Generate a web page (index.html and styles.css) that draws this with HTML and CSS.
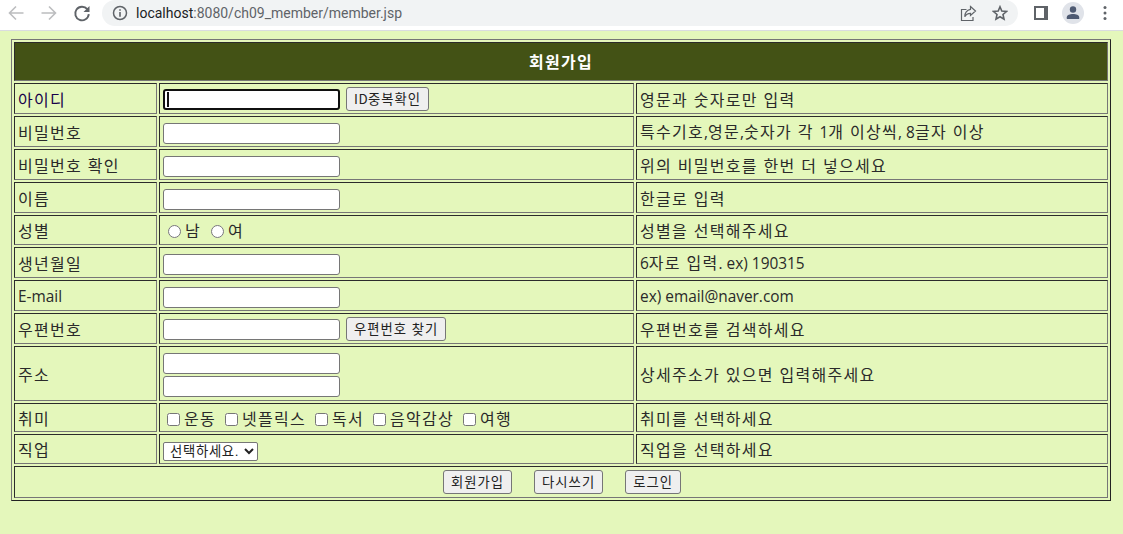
FILE: index.html
```html
<!DOCTYPE html>
<html lang="ko">
<head>
<meta charset="utf-8">
<title>회원가입</title>
<link rel="stylesheet" href="styles.css">
</head>
<body>
<header class="chrome">
  <div class="nav">
    <svg width="20" height="20" viewBox="0 0 20 20"><path d="M17.500 10H4M10 3.500 3.500 10l6.500 6.500" fill="none" stroke="#bcbdbf" stroke-width="1.600"/></svg>
    <svg width="20" height="20" viewBox="0 0 20 20"><path d="M2.500 10H16M10 3.500l6.500 6.500-6.500 6.500" fill="none" stroke="#bcbdbf" stroke-width="1.600"/></svg>
    <svg width="20" height="20" viewBox="0 0 20 20"><path d="M15.300 6.200A6.800 6.800 0 1 0 16.800 11.200" fill="none" stroke="#5f6368" stroke-width="1.900"/><path d="M17.500 3v6h-6z" fill="#5f6368"/></svg>
  </div>
  <div class="omnibox">
    <svg class="info" width="16" height="16" viewBox="0 0 16 16"><circle cx="8" cy="8" r="6.500" fill="none" stroke="#5f6368" stroke-width="1.500"/><path d="M7.200 7h1.600v4.800H7.200zM7.200 4.200h1.600v1.600H7.200z" fill="#5f6368"/></svg>
    <span class="url"><span class="host">localhost</span>:8080/ch09_member/member.jsp</span>
    <span class="spacer"></span>
    <svg class="share" width="18" height="18" viewBox="0 0 18 18"><path d="M7.500 5.500H2.500v11H14v-3.500" fill="none" stroke="#5f6368" stroke-width="1.200"/><path d="M11.500 2.500 16.500 7l-5 4.500V9.300C9 9.300 7 10.300 5.800 12.800 5.800 8.800 8 6 11.500 5.300z" fill="none" stroke="#5f6368" stroke-width="1.200"/></svg>
    <svg class="star" width="16" height="16" viewBox="0 0 16 16"><path d="M8 1.800l1.800 4.300 4.700.4-3.500 3 1 4.600L8 11.700l-4 2.400 1-4.600-3.500-3 4.700-.4z" fill="none" stroke="#5f6368" stroke-width="1.600"/></svg>
  </div>
  <div class="tools">
    <svg class="panel" width="14" height="14" viewBox="0 0 14 14"><path d="M0 0h14v14H0z" fill="#5f6368"/><path d="M2 2h8v10H2z" fill="#fff"/></svg>
    <span class="avatar"><svg width="16" height="16" viewBox="0 0 16 16"><circle cx="8" cy="4.500" r="3.200" fill="#4e5a72"/><path d="M1.800 14v-1.800C1.800 10 5 9 8 9s6.200 1 6.200 3.200V14z" fill="#4e5a72"/></svg></span>
    <svg class="dots" width="6" height="16" viewBox="0 0 6 16"><circle cx="3" cy="2.500" r="1.500" fill="#5f6368"/><circle cx="3" cy="8" r="1.500" fill="#5f6368"/><circle cx="3" cy="13.500" r="1.500" fill="#5f6368"/></svg>
  </div>
</header>
<main class="page">
<form>
<table class="form-table">
  <colgroup><col class="c1"><col class="c2"><col class="c3"></colgroup>
  <tr class="r-head"><th colspan="3">회원가입</th></tr>
  <tr class="r"><td class="lbl-id">아이디</td><td><input type="text" class="txt" autofocus><button type="button" class="btn side"><span class="btn-lat">ID</span>중복확인</button></td><td>영문과 숫자로만 입력</td></tr>
  <tr class="r"><td>비밀번호</td><td><input type="password" class="txt"></td><td>특수기호<span class="lat">,</span>영문<span class="lat">,</span>숫자가 각 <span class="lat">1</span>개 이상씩<span class="lat">, 8</span>글자 이상</td></tr>
  <tr class="r"><td>비밀번호 확인</td><td><input type="password" class="txt"></td><td>위의 비밀번호를 한번 더 넣으세요</td></tr>
  <tr class="r"><td>이름</td><td><input type="text" class="txt"></td><td>한글로 입력</td></tr>
  <tr class="r-s"><td>성별</td><td class="opts"><label><input type="radio" name="g" class="radio">남</label><label><input type="radio" name="g" class="radio">여</label></td><td>성별을 선택해주세요</td></tr>
  <tr class="r"><td>생년월일</td><td><input type="text" class="txt"></td><td><span class="lat">6</span>자로 입력<span class="lat">. ex) 190315</span></td></tr>
  <tr class="r"><td><span class="lat">E-mail</span></td><td><input type="text" class="txt"></td><td><span class="lat">ex) email@naver.com</span></td></tr>
  <tr class="r"><td>우편번호</td><td><input type="text" class="txt"><button type="button" class="btn side">우편번호 찾기</button></td><td>우편번호를 검색하세요</td></tr>
  <tr class="r-addr"><td>주소</td><td class="addr"><input type="text" class="txt block"><input type="text" class="txt block"></td><td>상세주소가 있으면 입력해주세요</td></tr>
  <tr class="r-hob"><td>취미</td><td class="opts"><label><input type="checkbox" class="check">운동</label><label><input type="checkbox" class="check">넷플릭스</label><label><input type="checkbox" class="check">독서</label><label><input type="checkbox" class="check">음악감상</label><label><input type="checkbox" class="check">여행</label></td><td>취미를 선택하세요</td></tr>
  <tr class="r-s"><td>직업</td><td><select class="sel"><option>선택하세요.</option></select></td><td>직업을 선택하세요</td></tr>
  <tr class="r-act"><td colspan="3" class="acts"><button type="button" class="btn">회원가입</button><button type="button" class="btn gap">다시쓰기</button><button type="button" class="btn gap">로그인</button></td></tr>
</table>
</form>
</main>
</body>
</html>
```
FILE: styles.css
```css
* { box-sizing: border-box; }
html, body { margin: 0; height: 100%; }
body { background: #e4f7bb; font-family: "Noto Sans CJK KR", "Noto Sans", sans-serif; font-size: 16px; color: #2a2a2a; overflow: hidden; }
.chrome { height: 31px; background: #fff; border-bottom: 1px solid #dadce0; display: flex; align-items: flex-start; padding-left: 6px; font-family: "Roboto", sans-serif; }
.nav { display: flex; gap: 13px; width: 96px; align-items: center; height: 26px; }
.omnibox { width: 916px; height: 26px; background: #f1f3f4; border-radius: 13px; display: flex; align-items: center; padding: 0 10px; }
.info { margin-right: 8px; }
.url { font-size: 14px; color: #5f6368; }
.host { color: #202124; }
.spacer { flex: 1; }
.share { margin-right: 15px; }
.tools { display: flex; align-items: center; height: 26px; padding-left: 16px; }
.avatar { width: 22px; height: 22px; margin-left: 14px; border-radius: 50%; background: #e0e3e9; display: flex; align-items: center; justify-content: center; }
.dots { margin-left: 18px; }
.page { padding: 8px 11px 0; }
.form-table { width: 1100px; table-layout: fixed; border: 1px solid; border-color: #767676 #222 #222 #767676; border-spacing: 2px; border-collapse: separate; }
.c1 { width: 143px; } .c2 { width: 475px; }
.form-table td, .form-table th { border: 1px solid; border-color: #2b2b2b #767676 #767676 #2b2b2b; padding: 1px 3px; line-height: 22px; vertical-align: middle; letter-spacing: 1.28px; overflow: hidden; white-space: nowrap; }
.form-table th { background: #435215; color: #fff; font-size: 16px; font-weight: 700; text-align: center; padding-bottom: 3px; }
.form-table .addr { padding-top: 3px; }
.form-table .acts { text-align: center; padding-left: 5px; padding-bottom: 3px; }
.lat { font-family: "Open Sans", sans-serif; font-size: 15.4px; letter-spacing: 0; }
.r-head { height: 39px; }
.r { height: 31px; } .r-s { height: 30px; } .r-addr { height: 55px; } .r-hob { height: 29px; } .r-act { height: 32px; }
.lbl-id { color: #17004a; }
.txt { width: 177px; height: 21px; padding: 1px 2px; border: 1px solid #767676; border-radius: 3px; background: #fff; vertical-align: middle; margin: 0; }
.txt:focus { outline: none; border: 2px solid #101010; background: linear-gradient(#111, #111) 2px 1px / 2px 15px no-repeat #fff; }
.block { display: block; margin-bottom: 2px; }
.block:last-child { margin-bottom: 0; }
.btn { height: 24px; padding: 0 7px; border: 1px solid #767676; border-radius: 3px; background: #efefef; color: #222; font: 13.333px "Noto Sans CJK KR", sans-serif; letter-spacing: 1px; line-height: 20px; vertical-align: middle; margin: 0; }
.btn-lat { letter-spacing: .5px; }
.side { margin-left: 6px; }
.gap { margin-left: 22px; }
.opts label { margin-right: 5px; }
.radio { width: 13px; height: 13px; margin: 0 4px 0 5px; vertical-align: -1px; }
.check { width: 13px; height: 13px; margin: 0 4px; vertical-align: -1px; }
.sel { width: 95px; height: 19px; font: 13.333px "Liberation Sans", "Noto Sans CJK KR", sans-serif; letter-spacing: .7px; border: 1px solid #767676; border-radius: 2px; background: #fff; padding: 0 0 0 2px; vertical-align: middle; color: #222; }
```
